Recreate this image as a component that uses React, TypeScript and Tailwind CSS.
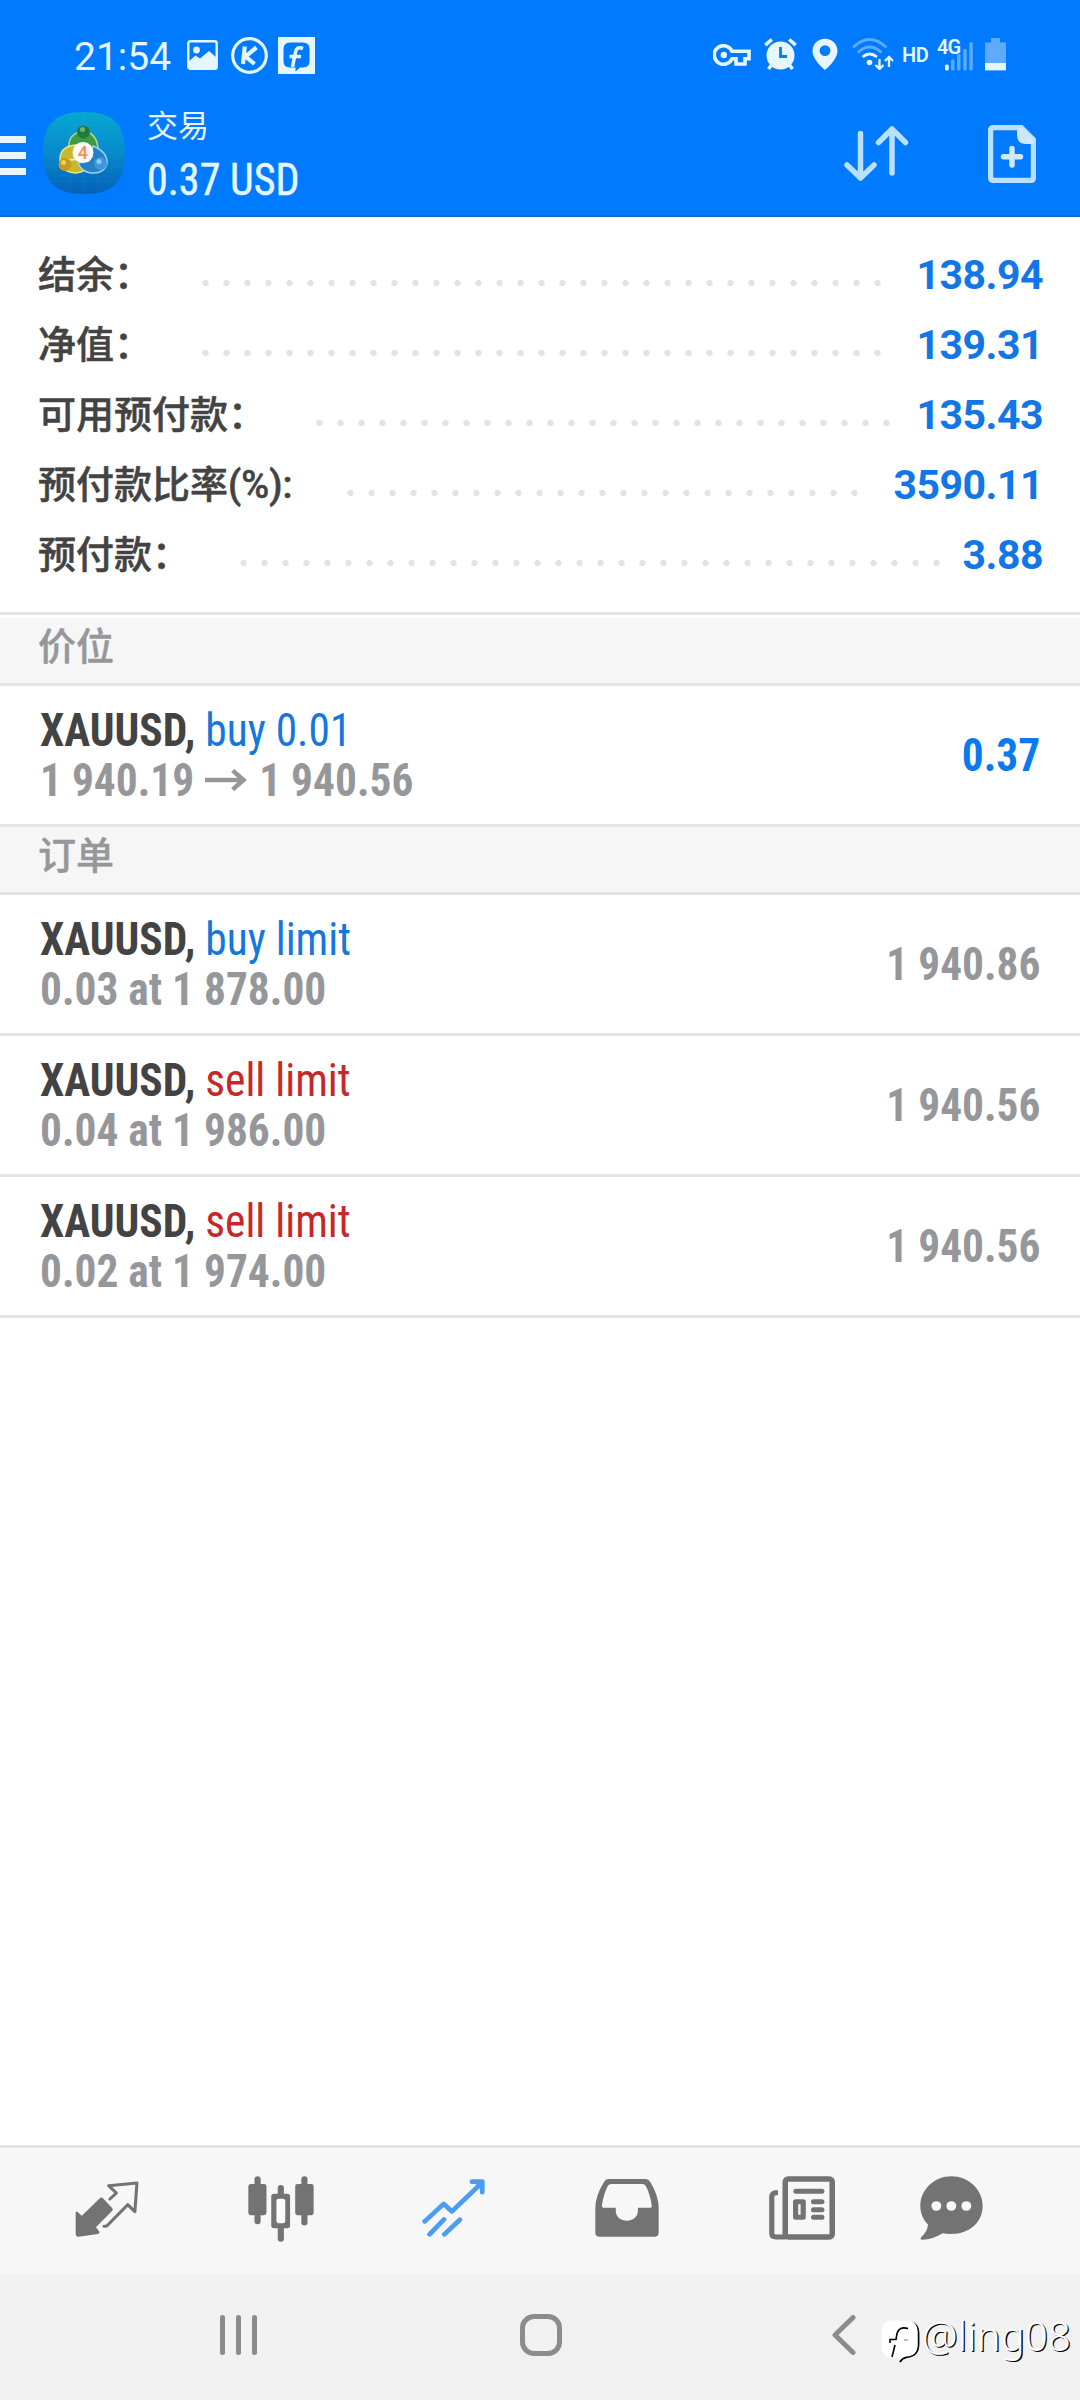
import type { ReactNode } from "react";

const summary = [
    { label: "结余：", value: "138.94", labelWidth: "w-[157px]", dotsWidth: "w-[693px]" },
    { label: "净值：", value: "139.31", labelWidth: "w-[157px]", dotsWidth: "w-[693px]" },
    { label: "可用预付款：", value: "135.43", labelWidth: "w-[271px]", dotsWidth: "w-[588px]" },
    { label: "预付款比率(%):", value: "3590.11", labelWidth: "w-[302px]", dotsWidth: "w-[525px]" },
    { label: "预付款：", value: "3.88", labelWidth: "w-[195px]", dotsWidth: "w-[714px]" },
];

const orders = [
    { side: "buy limit", color: "text-[#1577dc]", detail: "0.03 at 1 878.00", price: "1 940.86" },
    { side: "sell limit", color: "text-[#c62828]", detail: "0.04 at 1 986.00", price: "1 940.56" },
    { side: "sell limit", color: "text-[#c62828]", detail: "0.02 at 1 974.00", price: "1 940.56" },
];

function StatusBar() {
    return (
        <div className="flex h-[110px] items-start pt-[33px] pl-[74px] text-[#e6f6ff]">
            <span className="mt-px w-[113px] text-[39px] leading-[46px]">21:54</span>
            <svg className="mt-[7px] h-[30px] w-[31px]" viewBox="0 0 31 30">
                <rect x="1.3" y="1.3" width="28.4" height="27.4" rx="2" fill="none" stroke="currentColor" strokeWidth="2.4" />
                <circle cx="9.5" cy="10" r="3.4" fill="currentColor" />
                <path d="M1 22L8.500 15.500L13 18.500L22 11L30 18V28H1Z" fill="currentColor" />
            </svg>
            <svg className="mt-1 ml-[13px] h-[37px] w-[37px]" viewBox="0 0 37 37" fill="none" stroke="currentColor">
                <circle cx="18.500" cy="18.500" r="16.800" strokeWidth="3.200" />
                <path d="M13.800 9.500L12 27M25.500 10.500L14.500 19.500L23.500 27" strokeWidth="4.200" />
            </svg>
            <svg className="mt-1 ml-2.5 h-[37px] w-[37px]" viewBox="0 0 37 37">
                <path fill="currentColor" d="M0 0H37V37H0Z" />
                <path fill="#007aff" d="M12 5.500H25Q31.500 5.500 31.500 12V24Q31.500 30.500 25 30.500H22L17.500 34.500V30.500H12Q5.500 30.500 5.500 24V12Q5.500 5.500 12 5.500Z" />
                <path d="M25 11.500Q18.500 9 17.500 15L14.500 30M11.500 19.500H23" fill="none" stroke="currentColor" strokeWidth="3.600" />
            </svg>
            <div className="ml-[398px] flex items-start">
                <svg className="mt-[11px] h-[22px] w-[38px]" viewBox="0 0 38 22" fill="none" stroke="currentColor">
                    <path d="M19 7.200A9.300 9.300 0 1 0 19 14.800H23V20H32V14.800H36V7.200Z" strokeWidth="3.600" />
                    <circle cx="10.800" cy="11" r="3.200" fill="currentColor" stroke="none" />
                </svg>
                <svg className="mt-[5px] ml-[13px] h-8 w-[33px]" viewBox="0 0 33 32">
                    <circle cx="16.500" cy="17.500" r="14" fill="currentColor" />
                    <path d="M1.300 7.200L7.800 1.500M25.200 1.500L31.700 7.200M7.500 27L4.500 31M25.500 27L28.500 31" fill="none" stroke="currentColor" strokeWidth="3.600" />
                    <path d="M16.500 9V18.500H23" fill="none" stroke="#007aff" strokeWidth="2.800" />
                </svg>
                <svg className="mt-[5px] ml-[15px] h-[32px] w-[26px]" viewBox="0 0 26 32">
                    <path fill="currentColor" fillRule="evenodd" d="M13 0.700C6 0.700 0.500 6 0.500 13C0.500 22 13 32 13 32S25.500 22 25.500 13C25.500 6 20 0.700 13 0.700ZM13 7.200A5.400 5.400 0 1 1 13 18A5.400 5.400 0 1 1 13 7.200Z" />
                </svg>
                <svg className="mt-[5px] ml-[14px] h-8 w-[42px]" viewBox="0 0 42 32" fill="none" stroke="currentColor" strokeWidth="2.800">
                    <g strokeOpacity="0.4">
                        <path d="M1 9.500Q17.500 -6.500 34.500 9.500" />
                        <path d="M6 14.500Q17.500 3.500 29.500 14.500" />
                    </g>
                    <path d="M10.500 19Q17.500 13 25 19" />
                    <circle cx="17.500" cy="24.500" r="2.800" fill="currentColor" stroke="none" />
                    <path d="M27.500 21V31M23.500 27L27.500 31L31.500 27M37 29V19M33 23L37 19L41 23" strokeWidth="2.300" />
                </svg>
                <span className="mt-[10px] ml-[8px] w-[35px] text-[20px] leading-[24px] font-semibold tracking-[-0.5px]">HD</span>
                <div className="relative mt-[5px] h-[34px] w-[37px]">
                    <svg className="h-[34px] w-[37px]" viewBox="0 0 37 34" fill="currentColor">
                        <rect x="8" y="26.500" width="3.800" height="6" rx="1.500" />
                        <g opacity="0.4">
                            <rect x="14" y="21.500" width="3.500" height="11" rx="1.500" />
                            <rect x="20" y="16" width="3.500" height="16.500" rx="1.500" />
                            <rect x="26.200" y="11" width="3.500" height="21.500" rx="1.500" />
                            <rect x="32.300" y="4" width="3.500" height="28.500" rx="1.500" />
                        </g>
                    </svg>
                    <span className="absolute -top-[3px] left-0 text-[20px] leading-[24px] font-semibold tracking-[-1px]">4G</span>
                </div>
                <svg className="mt-[5px] ml-[11px] h-[33px] w-[21px]" viewBox="0 0 21 33" fill="currentColor">
                    <path opacity="0.4" d="M6 0H15V4.500H21V33H0V4.500H6Z" />
                    <rect y="25" width="21" height="7" />
                </svg>
            </div>
        </div>
    );
}

function AppLogo() {
    return (
        <svg className="h-[82px] w-[82px]" viewBox="0 0 82 82">
            <defs>
                <linearGradient id="tile" x1="0" y1="0" x2="0" y2="1">
                    <stop offset="0" stopColor="#06a8d2" />
                    <stop offset="0.500" stopColor="#0789cc" />
                    <stop offset="1" stopColor="#0560b8" />
                </linearGradient>
            </defs>
            <path fill="url(#tile)" d="M41 0C70 0 82 12 82 41S70 82 41 82S0 70 0 41S12 0 41 0Z" />
            <path d="M13 5V77M27 1V81M41 0V82M55 1V81M69 5V77M5 13H77M1 27H81M1 41H81M1 55H81M5 69H77" stroke="#fff" strokeOpacity="0.040" />
            <path d="M26 39Q24 24 36 20H45Q56 25 55 42L50 46H32Z" fill="#3f9a45" stroke="#a9d69a" strokeWidth="1.500" />
            <path d="M33 33Q18 34 17 46Q16 60 33 61Q40 60 43 57L35 47Z" fill="#c9b62f" stroke="#f0e58c" strokeWidth="1.500" />
            <path d="M50 34Q65 40 64 52Q61 62 48 61Q39 60 35 51L46 49Z" fill="#2580c4" stroke="#9bd3f2" strokeWidth="1.500" />
            <path d="M24 48L38 47" stroke="#f0e58c" strokeWidth="2" />
            <circle cx="40.500" cy="20" r="6.500" fill="#237a3a" />
            <circle cx="39.500" cy="17.500" r="2.500" fill="#6cba70" />
            <circle cx="22" cy="52.500" r="6.500" fill="#c49a20" />
            <circle cx="20.500" cy="50.500" r="2.500" fill="#ead05c" />
            <circle cx="57.500" cy="51.500" r="6.500" fill="#3f97dc" />
            <circle cx="56" cy="49.500" r="2.500" fill="#8ecbf5" />
            <circle cx="40" cy="40.500" r="10.500" fill="#fafafa" />
            <text x="40" y="47" textAnchor="middle" fontSize="18" fontWeight="600" fill="#f3954f">4</text>
        </svg>
    );
}

function Header() {
    return (
        <header className="h-[217px] border-b-2 border-[#1a68bd] bg-[#007aff]">
            <StatusBar />
            <div className="flex items-start">
                <div className="mt-[26px] flex w-[26px] flex-col gap-[9px]">
                    <div className="h-[7px] bg-[#e6f6ff]" />
                    <div className="h-[7px] bg-[#e6f6ff]" />
                    <div className="h-[7px] bg-[#e6f6ff]" />
                </div>
                <div className="mt-[2px] ml-[17px]">
                    <AppLogo />
                </div>
                <div className="ml-[22px] flex w-[695px] flex-col text-[#e6f6ff]">
                    <span className="mt-px text-[31px] leading-[31px]">交易</span>
                    <span className="font-stretch-condensed mt-[12px] origin-left scale-x-[0.935] text-[45px] leading-[52px] [-webkit-text-stroke:0.5px_#e6f6ff]">0.37 USD</span>
                </div>
                <svg className="mt-[15px] ml-px h-[57px] w-[66px]" viewBox="0 0 66 57" fill="none" stroke="#b9e0ff" strokeWidth="5.500" strokeLinecap="round" strokeLinejoin="round">
                    <path d="M17.500 8.500V52.500M4 40L17.500 53L31 40M49 48V4.500M35.500 17.500L49 4L62.500 17.500" />
                </svg>
                <svg className="mt-[15px] ml-[79px] h-[58px] w-[48px]" viewBox="0 0 48 58">
                    <path d="M6 2.500H33L45.500 15V52Q45.500 55.500 42 55.500H6Q2.500 55.500 2.500 52V6Q2.500 2.500 6 2.500Z" fill="none" stroke="#b9e0ff" strokeWidth="5.500" />
                    <path d="M29 3H35L46 14V19H38Q29 19 29 10Z" fill="#cfe6ff" />
                    <path d="M24 23.500V40M15.500 31.700H32.500" stroke="#cfe9ff" strokeWidth="5.500" strokeLinecap="round" />
                </svg>
            </div>
        </header>
    );
}

function SectionTitle({ children }: { children: ReactNode }) {
    return (
        <div className="h-[68px] border-b-[3px] border-[#e3e4e5] bg-[#f6f6f6] pl-[38px] text-[38px] leading-[58px] font-medium text-[#95979a] [-webkit-text-stroke:0.4px_#95979a]">
            {children}
        </div>
    );
}

function Row({ side, color, detail, price, priceColor }: { side: string; color: string; detail: ReactNode; price: string; priceColor: string }) {
    return (
        <div className="font-stretch-condensed flex h-[141px] items-center justify-between border-b-[3px] border-[#e3e4e5] pr-[40px] pl-[40px] text-[46px] leading-[50px]">
            <div className="origin-left scale-x-[0.943]">
                <p>
                    <span className="font-bold text-[#434343]">XAUUSD, </span>
                    <span className={color}>{side}</span>
                </p>
                <p className="font-bold text-[#95979a]">{detail}</p>
            </div>
            <p className={`origin-right scale-x-[0.943] font-bold ${priceColor}`}>{price}</p>
        </div>
    );
}

function TabBar() {
    return (
        <nav className="flex h-[129px] items-start border-t-[3px] border-[#e3e4e4] bg-[#f7f7f7] pl-[20px]">
            <div className="flex w-[174px] justify-center pt-[33px]">
                <svg className="h-[56px] w-[64px]" viewBox="219 154 187 168" preserveAspectRatio="none">
                    <path fill="#737373" d="M293 204Q296 202 300 205L328 236Q331 240 328 243L280 293L291 307Q291 311 286 313L229 321Q221 322 221 314V247Q224 243 229 249L239 258Z" />
                    <path d="M321 208L340 190L317 168L400 160L394 246L373 225L312 289L304 290" fill="none" stroke="#737373" strokeWidth="9" strokeLinejoin="round" strokeLinecap="round" />
                </svg>
            </div>
            <div className="flex w-[173px] justify-center pt-[28px]">
                <svg className="h-[66px] w-[66px]" viewBox="717 138 193 197" preserveAspectRatio="none" fill="#737373">
                    <rect x="718" y="162" width="53" height="93" rx="7" />
                    <rect x="736" y="139" width="18" height="143" rx="9" />
                    <rect x="855" y="162" width="54" height="93" rx="7" />
                    <rect x="873" y="139" width="18" height="147" rx="9" />
                    <rect x="804" y="165" width="18" height="40" rx="9" />
                    <rect x="804" y="282" width="18" height="52" rx="9" />
                    <rect x="785" y="191" width="55" height="103" rx="8" />
                    <rect x="800" y="206" width="26" height="73" rx="7" fill="#fbfbfb" />
                </svg>
            </div>
            <div className="flex w-[173px] justify-center pt-[31px]">
                <svg className="h-[58px] w-[63px]" viewBox="1224 147 183 175" preserveAspectRatio="none" fill="none" stroke="#4c9df0" strokeWidth="14" strokeLinecap="round" strokeLinejoin="round">
                    <path d="M1232 275L1287 222L1311 245L1393 163M1246 314L1288 269M1289 314L1334 270" />
                    <path d="M1369 155H1399V187" />
                    <path d="M1378 158H1398V178Z" fill="#4c9df0" strokeWidth="4" />
                </svg>
            </div>
            <div className="flex w-[174px] justify-center pt-[31px]">
                <svg className="h-[58px] w-[64px]" viewBox="161 147 185 175" preserveAspectRatio="none">
                    <path fill="#737373" fillRule="evenodd" d="M200 147H307Q316 147 321 156Q345 198 345 234V309Q345 321 333 321H174Q162 321 162 309V234Q162 198 187 156Q192 147 200 147ZM209 162Q201 162 198 168Q185 195 181 226Q180 234 188 234H221V242C221 283 285 283 285 242V234H318Q327 234 325 226Q321 195 308 168Q305 162 298 162Z" />
                </svg>
            </div>
            <div className="flex w-[175px] justify-center pt-[28px]">
                <svg className="h-[64px] w-[66px]" viewBox="664 138 191 192" preserveAspectRatio="none" fill="none" stroke="#737373" strokeLinecap="round" strokeLinejoin="round">
                    <rect x="711" y="147" width="136" height="174" rx="8" strokeWidth="16" />
                    <path d="M690 188H683Q672 190 672 200V310Q672 321 684 321H712" strokeWidth="15" strokeLinecap="butt" />
                    <path d="M742 184H817M793 215H817M793 239H817M793 262H817" strokeWidth="15" />
                    <rect x="741" y="215" width="22" height="47" strokeWidth="15" />
                </svg>
            </div>
            <div className="flex w-[125px] justify-center pt-[28px]">
                <svg className="h-[64px] w-[63px]" viewBox="1101 138 185 192" preserveAspectRatio="none">
                    <path fill="#737373" d="M1193 139C1243 139 1285 178 1285 228C1285 280 1240 322 1167 310Q1137 330 1106 329Q1100 327 1105 321Q1125 301 1124 283C1110 268 1102 250 1102 228C1102 178 1144 139 1193 139Z" />
                    <g fill="#f7f7f7">
                        <circle cx="1149" cy="228" r="14.500" />
                        <circle cx="1193" cy="228" r="14.500" />
                        <circle cx="1237" cy="228" r="14.500" />
                    </g>
                </svg>
            </div>
        </nav>
    );
}

function SystemBar() {
    return (
        <div className="relative flex h-[126px] items-start bg-[#f1f1f1] pt-[40px]">
            <div className="ml-[220px] flex gap-[11px] pt-[1px]">
                <div className="h-[40px] w-[5px] rounded-full bg-[#8c8c8c]" />
                <div className="h-[40px] w-[5px] rounded-full bg-[#8c8c8c]" />
                <div className="h-[40px] w-[5px] rounded-full bg-[#8c8c8c]" />
            </div>
            <div className="ml-[263px] h-[42px] w-[42px] rounded-[14px] border-[5px] border-[#8c8c8c]" />
            <svg className="mt-[1px] ml-[270px] h-[40px] w-[24px]" viewBox="0 0 24 40" fill="none" stroke="#8c8c8c" strokeWidth="5" strokeLinecap="round" strokeLinejoin="round">
                <path d="M21 2.500L3 20L21 37.500" />
            </svg>
            <div className="absolute top-[46px] left-[881px] flex items-start">
                <svg className="h-[43px] w-[39px]" viewBox="0 0 39 43">
                    <path d="M31 2.500Q37.500 5 37.500 13V24Q37.500 36 26 37Q21 38 19 42" fill="none" stroke="#000" strokeWidth="1.800" />
                    <path d="M12 0.500H25Q36.500 0.500 36.500 12V25Q36.500 36 25 36.500Q20 38 18.500 41V38H12Q0.500 38 0.500 26V12Q0.500 0.500 12 0.500Z" fill="#fff" />
                    <path d="M27 8.500Q18 6 16 13.500L15 19.500H8.500M9 19V23M14 25L11 37" fill="none" stroke="#000" strokeWidth="1.600" />
                    <path d="M23 20H27" stroke="#777" strokeWidth="1" />
                </svg>
                <span className="mt-[-11px] ml-[2px] font-['Noto_Sans',sans-serif] text-[40px] leading-[54px] font-light tracking-[0.2px] text-white [text-shadow:1.3px_1px_0_#000]">@ling08</span>
            </div>
        </div>
    );
}

export default function App() {
    return (
        <div className="flex h-[2400px] w-[1080px] flex-col overflow-hidden bg-white font-[Roboto,'Noto_Sans_CJK_SC',sans-serif]">
            <Header />
            <section className="mb-[3px] h-[398px] border-b-[3px] border-[#e3e4e5] pt-[22px] pr-[37px] pl-[38px]">
                {summary.map((item) => (
                    <div key={item.label} className="flex h-[70px] items-center">
                        <span className={`${item.labelWidth} mt-[1px] text-[38px] leading-[50px] font-medium whitespace-nowrap text-[#434343] [-webkit-text-stroke:0.5px_#434343]`}>{item.label}</span>
                        <div className={`${item.dotsWidth} mt-[18px] h-[8px] bg-[radial-gradient(circle,#e3e3e3_2.8px,transparent_3.6px)] bg-[length:21px_8px]`} />
                        <span className="mt-[2px] flex-1 text-right text-[41px] leading-[50px] font-bold tracking-[-0.5px] text-[#1276e6]">{item.value}</span>
                    </div>
                ))}
            </section>
            <SectionTitle>价位</SectionTitle>
            <Row
                side="buy 0.01"
                color="text-[#1577dc]"
                detail={
                    <>
                        1 940.19
                        <svg className="mx-[12px] inline-block h-[22px] w-[45px] align-[5px]" viewBox="0 0 43 22" preserveAspectRatio="none" fill="none" stroke="currentColor" strokeWidth="4.500">
                            <path d="M0 11H39M28 1.500L39 11L28 20.500" />
                        </svg>
                        1 940.56
                    </>
                }
                price="0.37"
                priceColor="text-[#0a7af0]"
            />
            <SectionTitle>订单</SectionTitle>
            {orders.map((order) => (
                <Row key={order.detail} {...order} priceColor="text-[#95979a]" />
            ))}
            <main className="flex-1" />
            <TabBar />
            <SystemBar />
        </div>
    );
}
